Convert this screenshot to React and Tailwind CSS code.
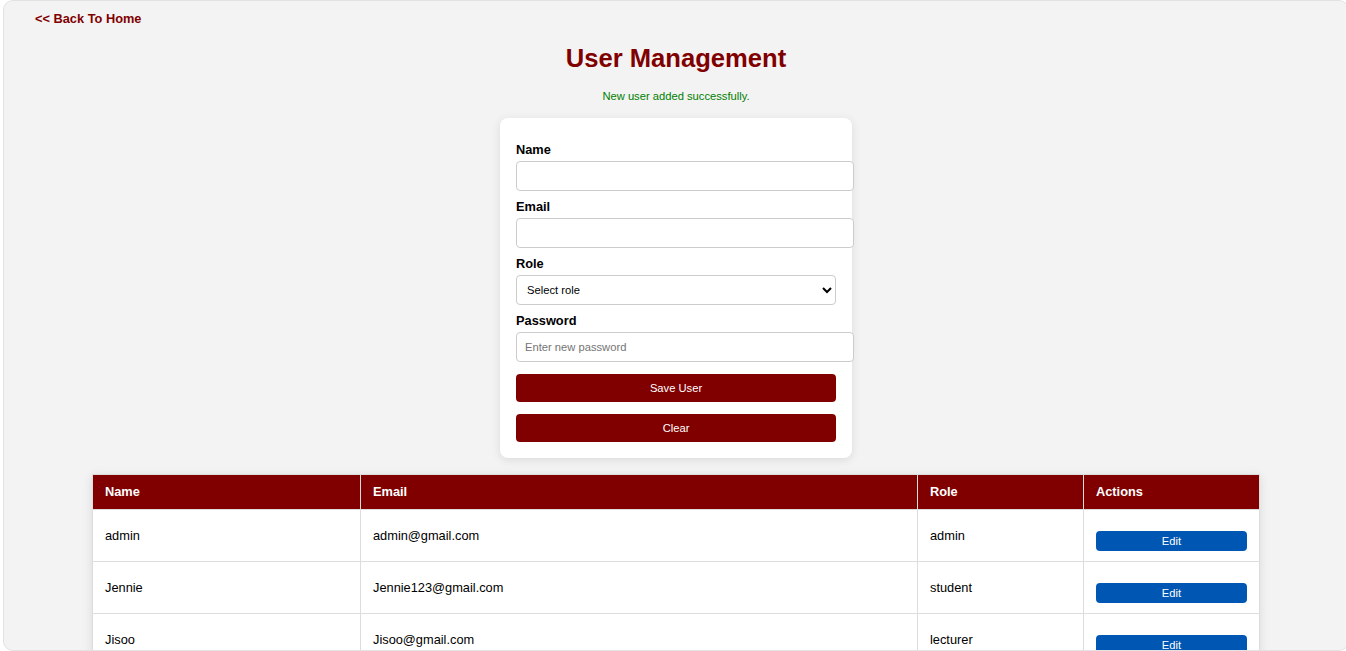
import { useState } from "react";

const users = [
  { id: 1, name: "admin", email: "admin@gmail.com", role: "admin" },
  { id: 2, name: "Jennie", email: "Jennie123@gmail.com", role: "student" },
  { id: 3, name: "Jisoo", email: "Jisoo@gmail.com", role: "lecturer" },
  { id: 4, name: "Lisa", email: "Lisa@gmail.com", role: "student" },
];

function Field({ label, children }) {
  return (
    <div className="mb-[7px]">
      <label className="block text-[12.8px] leading-[17px] font-bold text-black">{label}</label>
      <div className="mt-[3px]">{children}</div>
    </div>
  );
}

export default function App() {
  const [form, setForm] = useState({ name: "", email: "", role: "", password: "" });

  const inputCls =
    "block w-[338px] h-[30px] px-[8px] text-[11.2px] bg-white border border-[#cccccc] rounded-[4px] outline-none placeholder:text-[#757575]";

  return (
    <div className="w-full h-[651px] overflow-hidden bg-white" style={{ fontFamily: '"Liberation Sans", Arial, sans-serif' }}>
      <div className="ml-[3px] w-[1346px] h-[651px] overflow-hidden rounded-[10px] border border-[#e2e2e2] bg-[#f3f3f3]">
        {/* Lien retour */}
        <div className="pt-[10px] px-[31px]">
          <a href="#" className="block w-fit text-[12.8px] leading-[16px] font-bold text-[#800000]">
            &lt;&lt; Back To Home
          </a>
        </div>

        <h1 className="mt-[16px] text-center text-[25.6px] leading-[30px] font-bold text-[#800000]">
          User Management
        </h1>
        <p className="mt-[16px] text-center text-[11.2px] leading-[14px] text-[#008000]">
          New user added successfully.
        </p>

        {/* Formulaire */}
        <div className="mx-auto mt-[15px] w-[352px] bg-white rounded-[8px] shadow-[0_2px_10px_rgba(0,0,0,0.1)] px-[16px] pt-[23px] pb-[16px]">
          <Field label="Name">
            <input
              className={inputCls}
              value={form.name}
              onChange={(e) => setForm({ ...form, name: e.target.value })}
            />
          </Field>
          <Field label="Email">
            <input
              className={inputCls}
              value={form.email}
              onChange={(e) => setForm({ ...form, email: e.target.value })}
            />
          </Field>
          <Field label="Role">
            <select
              className="block w-[320px] h-[30px] px-[6px] text-[11.2px] text-black bg-white border border-[#cccccc] rounded-[4px] outline-none"
              value={form.role}
              onChange={(e) => setForm({ ...form, role: e.target.value })}
            >
              <option value="">Select role</option>
              <option value="admin">admin</option>
              <option value="student">student</option>
              <option value="lecturer">lecturer</option>
            </select>
          </Field>
          <Field label="Password">
            <input
              type="password"
              placeholder="Enter new password"
              className={inputCls}
              value={form.password}
              onChange={(e) => setForm({ ...form, password: e.target.value })}
            />
          </Field>

          <button className="mt-[12px] block w-[320px] h-[28px] rounded-[4px] bg-[#800000] text-white text-[11.2px]">
            Save User
          </button>
          <button
            onClick={() => setForm({ name: "", email: "", role: "", password: "" })}
            className="mt-[12px] block w-[320px] h-[28px] rounded-[4px] bg-[#800000] text-white text-[11.2px]"
          >
            Clear
          </button>
        </div>

        {/* Tableau des utilisateurs */}
        <table className="mx-auto mt-[16px] w-[1167px] table-fixed border-collapse bg-white shadow-[0_2px_10px_rgba(0,0,0,0.1)] text-[12.8px]">
          <colgroup>
            <col className="w-[268px]" />
            <col className="w-[557px]" />
            <col className="w-[166px]" />
            <col className="w-[176px]" />
          </colgroup>
          <thead>
            <tr className="h-[35px] bg-[#800000] text-white">
              {["Name", "Email", "Role", "Actions"].map((h) => (
                <th key={h} className="px-[12px] text-left font-bold border border-[#dddddd]">
                  {h}
                </th>
              ))}
            </tr>
          </thead>
          <tbody>
            {users.map((u) => (
              <tr key={u.id} className="h-[52px]">
                <td className="px-[12px] border border-[#dddddd] text-black align-middle">{u.name}</td>
                <td className="px-[12px] border border-[#dddddd] text-black align-middle">{u.email}</td>
                <td className="px-[12px] border border-[#dddddd] text-black align-middle">{u.role}</td>
                <td className="px-[12px] border border-[#dddddd] align-middle">
                  <button className="mt-[11px] block w-full h-[20px] rounded-[4px] bg-[#0057b3] text-white text-[11.2px]">
                    Edit
                  </button>
                </td>
              </tr>
            ))}
          </tbody>
        </table>
      </div>
    </div>
  );
}
